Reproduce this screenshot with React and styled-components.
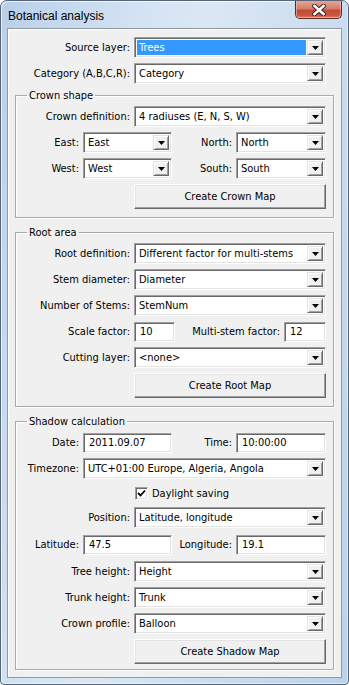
import React from 'react';
import styled, { createGlobalStyle } from 'styled-components';

const GlobalStyle = createGlobalStyle`
  html, body {
    margin: 0;
    padding: 0;
    background: #fff;
  }
  body {
    font-family: "DejaVu Sans Condensed", "DejaVu Sans", sans-serif;
    font-size: 11px;
    color: #000;
  }
`;

const Window = styled.div`
  width: 349px;
  height: 685px;
  box-sizing: border-box;
  display: flex;
  flex-direction: column;
  padding: 0 6px 6px;
  border: 1px solid #56657a;
  border-radius: 7px 7px 4px 4px;
  background: linear-gradient(100deg, #b9cfe9 0%, #d4e3f3 30%, #dbe7f4 45%, #c9dbef 75%, #bcd2eb 100%);
  box-shadow: inset 1px 1px 0 rgba(255, 255, 255, 0.7), inset -1px -1px 0 rgba(255, 255, 255, 0.5);
`;

const TitleBar = styled.div`
  height: 27px;
  display: flex;
  justify-content: space-between;
  align-items: flex-start;
`;

const Title = styled.div`
  font-family: "Liberation Sans", Arial, sans-serif;
  font-size: 12px;
  line-height: 14px;
  padding: 8px 0 0 1px;
  color: #000;
`;

const CloseButton = styled.div`
  width: 47px;
  height: 18px;
  box-sizing: border-box;
  display: flex;
  align-items: center;
  justify-content: center;
  border: 1px solid #5b2a24;
  border-top: none;
  border-radius: 0 0 5px 5px;
  background: linear-gradient(180deg, #e6a597 0%, #d47c6a 45%, #c24a35 55%, #c9573f 85%, #d9806a 100%);
  box-shadow: inset 0 -1px 0 rgba(255, 200, 190, 0.6), inset 1px 0 0 rgba(255, 210, 200, 0.5), inset -1px 0 0 rgba(255, 210, 200, 0.5);
`;

const Client = styled.div`
  flex: 1;
  display: flex;
  flex-direction: column;
  gap: 5px;
  padding: 8px 7px 0;
  background: #f0f0f0;
  border: 1px solid #8f9aa7;
  box-shadow: inset 1px 1px 0 #fff;
`;

const Section = styled.div`
  display: flex;
  flex-direction: column;
  gap: 5px;
  padding: 0 8px;
`;

const GroupBox = styled.fieldset`
  margin: ${({ $top }) => $top || 0}px 0 0;
  min-width: 0;
  padding: 4px 7px ${({ $bottom }) => $bottom}px;
  display: flex;
  flex-direction: column;
  gap: 5px;
  border: 1px solid #a9a9a9;
  border-radius: 0;
  box-shadow: inset 1px 1px 0 #fff, 1px 1px 0 #fff;
`;

const Legend = styled.legend`
  padding: 0 2px;
  margin-left: 4px;
  line-height: 13px;
  font-size: 11px;
`;

const Row = styled.div`
  display: grid;
  grid-template-columns: ${({ $cols }) => $cols || '1fr 192px'};
  column-gap: 4px;
  align-items: center;
  min-height: ${({ $h }) => $h || 21}px;
  margin: ${({ $mt }) => $mt || 0}px 0 ${({ $mb }) => $mb || 0}px;
`;

const Label = styled.span`
  text-align: right;
  white-space: nowrap;
`;

const Sunken = styled.div`
  box-sizing: border-box;
  border: 1px solid;
  border-color: #a0a0a0 #fff #fff #a0a0a0;
  box-shadow: inset 1px 1px 0 #696969, inset -1px -1px 0 #e3e3e3;
  background: #fff;
`;

const ComboBox = styled(Sunken)`
  height: 21px;
  display: flex;
  padding: 2px;
  gap: 1px;
`;

const ComboValue = styled.div`
  flex: 1;
  display: flex;
  align-items: center;
  padding-left: 2px;
  white-space: nowrap;
  overflow: hidden;
  background: ${({ $selected }) => ($selected ? '#3399ff' : 'transparent')};
  color: ${({ $selected }) => ($selected ? '#fff' : '#000')};
`;

const DropButton = styled.div`
  width: 16px;
  box-sizing: border-box;
  display: flex;
  align-items: center;
  justify-content: center;
  background: #f0f0f0;
  border: 1px solid;
  border-color: #e3e3e3 #696969 #696969 #e3e3e3;
  box-shadow: inset 1px 1px 0 #fff, inset -1px -1px 0 #a0a0a0;
`;

const TextBox = styled(Sunken)`
  height: 20px;
  display: flex;
  align-items: center;
  padding-left: 5px;
`;

const PushButton = styled.div`
  grid-column: 2;
  height: 25px;
  box-sizing: border-box;
  display: flex;
  align-items: center;
  justify-content: center;
  background: #f0f0f0;
  border: 1px solid;
  border-color: #fff #696969 #696969 #fff;
  box-shadow: inset -1px -1px 0 #a0a0a0, inset 1px 1px 0 #e3e3e3;
`;

const CheckWrap = styled.label`
  grid-column: 2;
  display: flex;
  align-items: center;
  gap: 4px;
  padding-left: 1px;
`;

const CheckBox = styled(Sunken)`
  width: 13px;
  height: 13px;
  display: flex;
  align-items: center;
  justify-content: center;
`;

const Combo = ({ value, selected }) => (
  <ComboBox>
    <ComboValue $selected={selected}>{value}</ComboValue>
    <DropButton>
      <svg width="7" height="4" viewBox="0 0 7 4">
        <path d="M0 0h7L3.5 4z" fill="#000" />
      </svg>
    </DropButton>
  </ComboBox>
);

const HALF = '1fr 89px 1fr 90px';

export default function App() {
  return (
    <>
      <GlobalStyle />
      <Window>
        <TitleBar>
          <Title>Botanical analysis</Title>
          <CloseButton>
            <svg width="14" height="12" viewBox="0 0 14 12">
              <path d="M2.5 2L11.5 10M11.5 2L2.5 10" stroke="#3d2622" strokeWidth="4.6" strokeLinecap="square" />
              <path d="M2.5 2L11.5 10M11.5 2L2.5 10" stroke="#fff" strokeWidth="2.6" strokeLinecap="square" />
            </svg>
          </CloseButton>
        </TitleBar>
        <Client>
          <Section>
            <Row>
              <Label>Source layer:</Label>
              <Combo value="Trees" selected />
            </Row>
            <Row>
              <Label>Category (A,B,C,R):</Label>
              <Combo value="Category" />
            </Row>
          </Section>

          <GroupBox $bottom={8}>
            <Legend>Crown shape</Legend>
            <Row>
              <Label>Crown definition:</Label>
              <Combo value="4 radiuses (E, N, S, W)" />
            </Row>
            <Row $cols={HALF}>
              <Label>East:</Label>
              <Combo value="East" />
              <Label>North:</Label>
              <Combo value="North" />
            </Row>
            <Row $cols={HALF}>
              <Label>West:</Label>
              <Combo value="West" />
              <Label>South:</Label>
              <Combo value="South" />
            </Row>
            <Row>
              <PushButton>Create Crown Map</PushButton>
            </Row>
          </GroupBox>

          <GroupBox $top={3} $bottom={8}>
            <Legend>Root area</Legend>
            <Row>
              <Label>Root definition:</Label>
              <Combo value="Different factor for multi-stems" />
            </Row>
            <Row>
              <Label>Stem diameter:</Label>
              <Combo value="Diameter" />
            </Row>
            <Row>
              <Label>Number of Stems:</Label>
              <Combo value="StemNum" />
            </Row>
            <Row $cols="107px 41px 1fr 42px">
              <Label>Scale factor:</Label>
              <TextBox>10</TextBox>
              <Label>Multi-stem factor:</Label>
              <TextBox>12</TextBox>
            </Row>
            <Row>
              <Label>Cutting layer:</Label>
              <Combo value="<none>" />
            </Row>
            <Row>
              <PushButton>Create Root Map</PushButton>
            </Row>
          </GroupBox>

          <GroupBox $top={3} $bottom={5}>
            <Legend>Shadow calculation</Legend>
            <Row $cols={HALF}>
              <Label>Date:</Label>
              <TextBox>2011.09.07</TextBox>
              <Label>Time:</Label>
              <TextBox>10:00:00</TextBox>
            </Row>
            <Row $cols="56px 1fr">
              <Label>Timezone:</Label>
              <Combo value="UTC+01:00 Europe, Algeria, Angola" />
            </Row>
            <Row $h={18}>
              <CheckWrap>
                <CheckBox>
                  <svg width="9" height="9" viewBox="0 0 9 9">
                    <path d="M1 4l2.5 2.5L8 1.5" stroke="#000" strokeWidth="1.8" fill="none" />
                  </svg>
                </CheckBox>
                Daylight saving
              </CheckWrap>
            </Row>
            <Row>
              <Label>Position:</Label>
              <Combo value="Latitude, longitude" />
            </Row>
            <Row $cols={HALF} $mt={1} $mb={1}>
              <Label>Latitude:</Label>
              <TextBox>47.5</TextBox>
              <Label>Longitude:</Label>
              <TextBox>19.1</TextBox>
            </Row>
            <Row>
              <Label>Tree height:</Label>
              <Combo value="Height" />
            </Row>
            <Row>
              <Label>Trunk height:</Label>
              <Combo value="Trunk" />
            </Row>
            <Row>
              <Label>Crown profile:</Label>
              <Combo value="Balloon" />
            </Row>
            <Row>
              <PushButton>Create Shadow Map</PushButton>
            </Row>
          </GroupBox>
        </Client>
      </Window>
    </>
  );
}
